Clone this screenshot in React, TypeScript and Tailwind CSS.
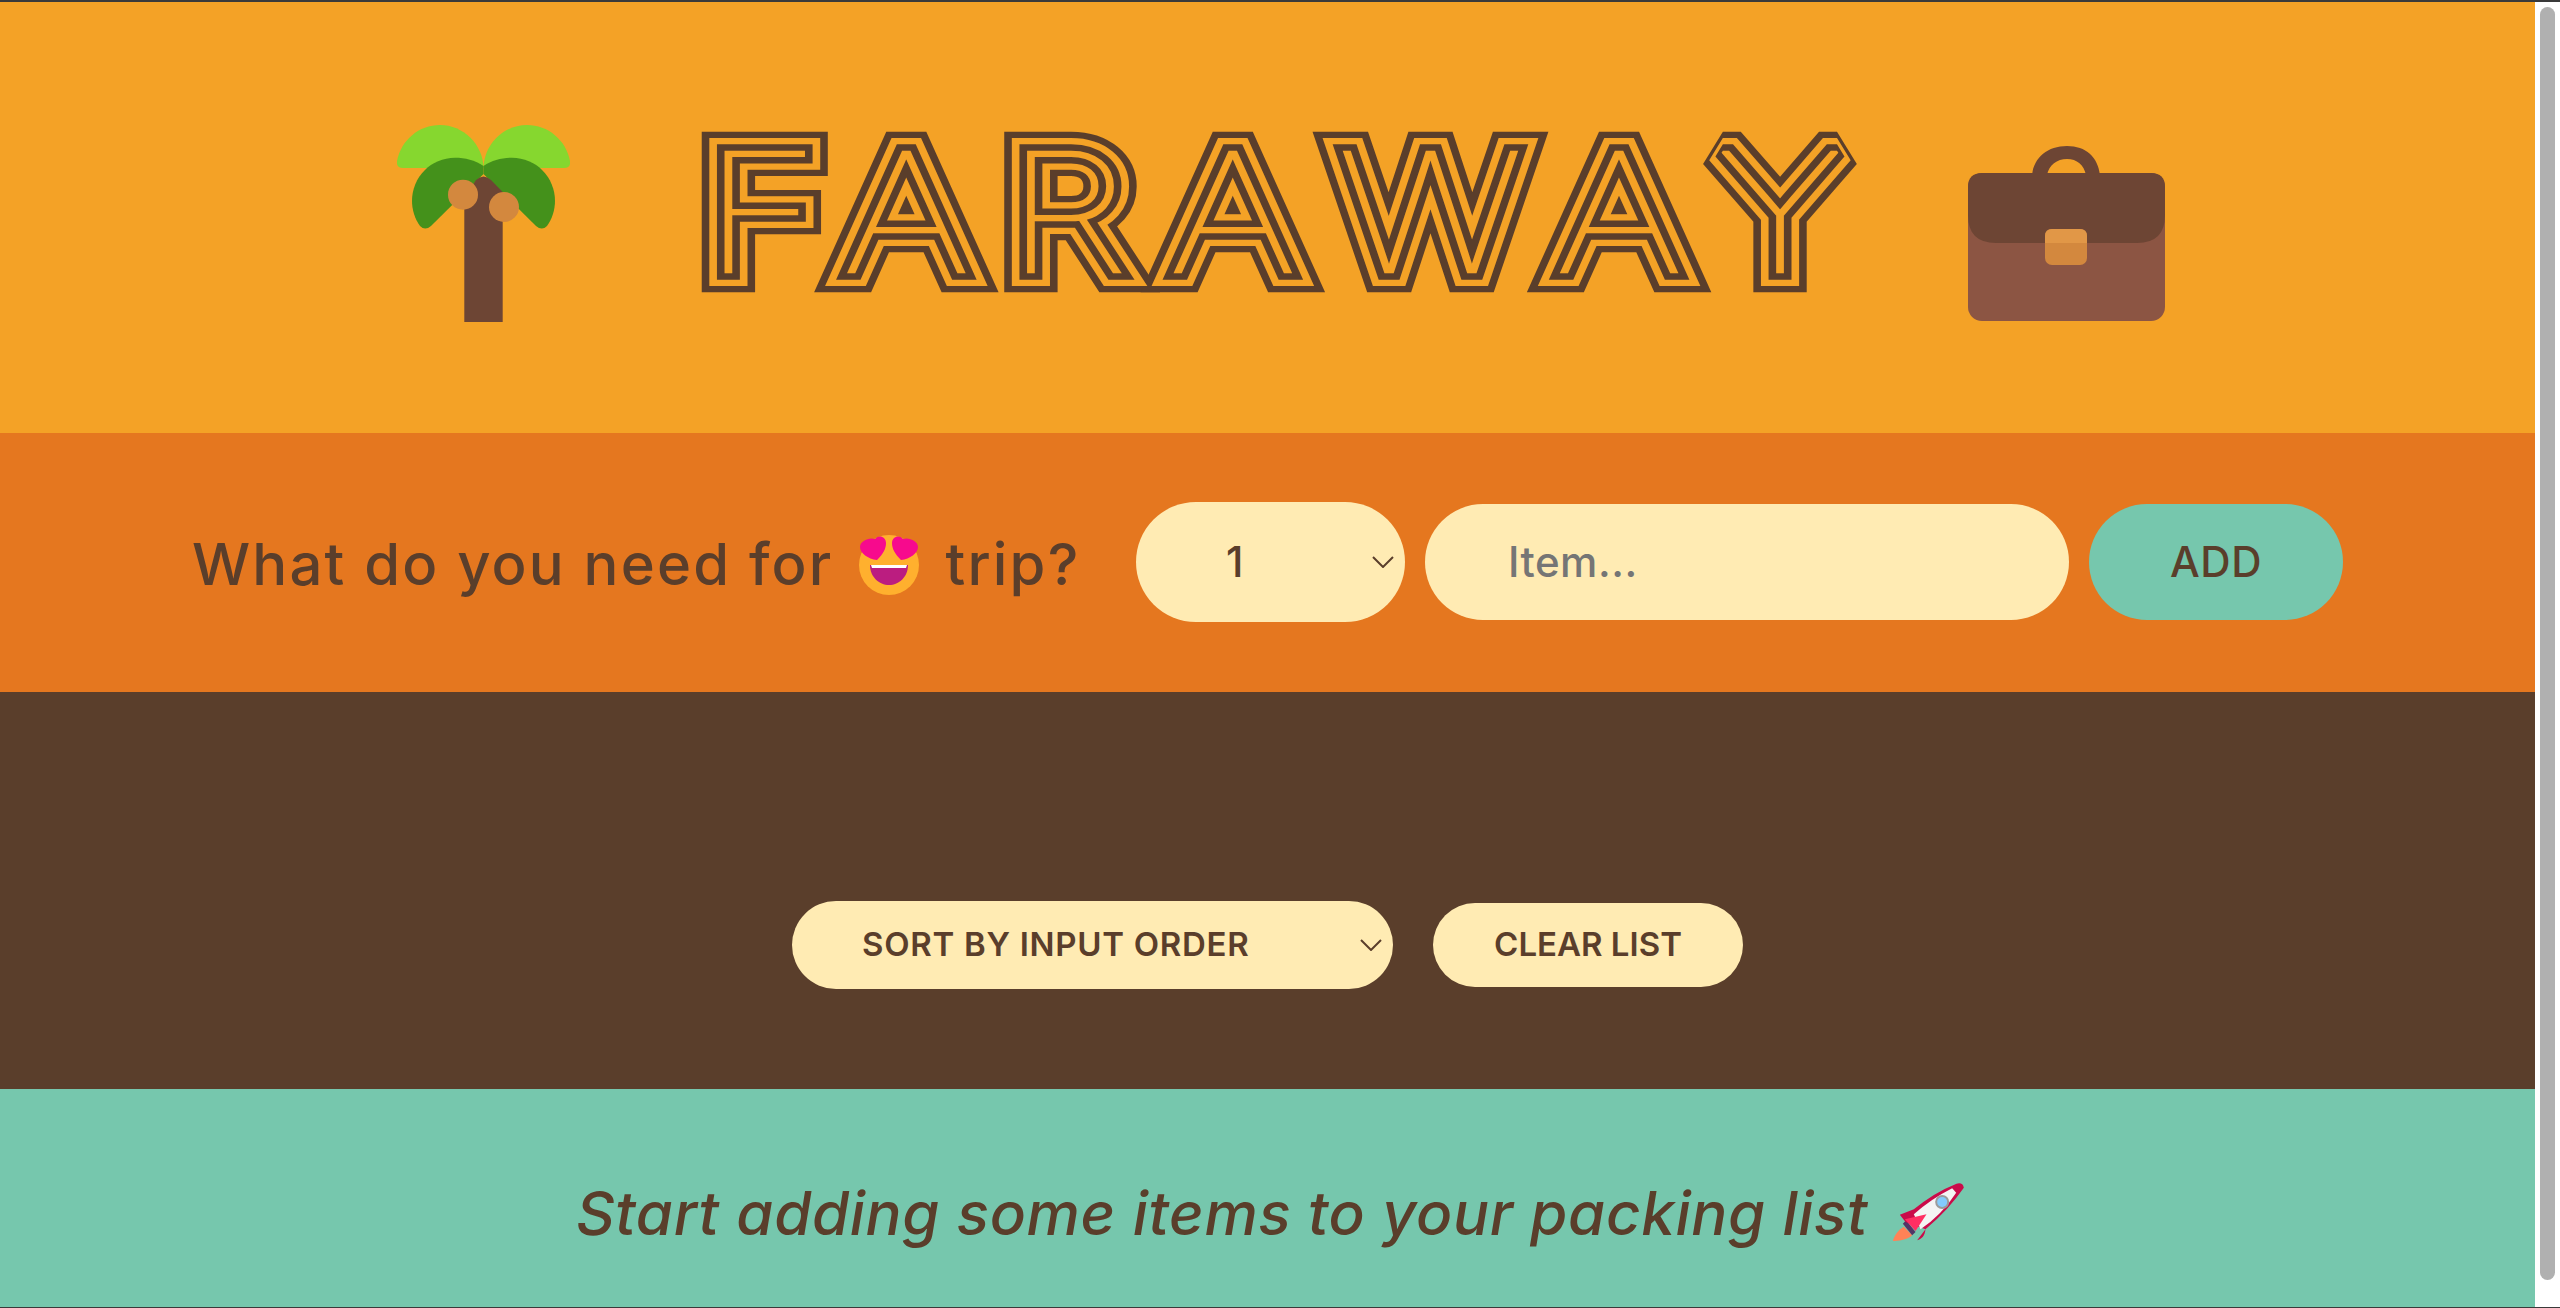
import React from 'react';

const PalmIcon = () => (
  <svg viewBox="0 0 173 198" className="w-[173px] h-[198px] shrink-0">
    <path d="M6 44Q-1 44 0 37C4 16 22 1 43 1C66 1 86 20 86.500 44Z" fill="#86d72f" />
    <path d="M6 44Q-1 44 0 37C4 16 22 1 43 1C66 1 86 20 86.500 44Z" fill="#86d72f" transform="translate(173 0) scale(-1 1)" />
    <path d="M86.500 42C78 36 68 33.700 58 33.700C34 33.700 15 53 15 77C15 86 18 95 23 102Q28 107 34 102L86.500 50Z" fill="#44911b" />
    <path d="M86.500 42C78 36 68 33.700 58 33.700C34 33.700 15 53 15 77C15 86 18 95 23 102Q28 107 34 102L86.500 50Z" fill="#44911b" transform="translate(173 0) scale(-1 1)" />
    <path d="M67.300 198V74L79 56Q86.500 49 94 56L105.700 68V198Z" fill="#6d4534" />
    <circle cx="66" cy="70.700" r="15" fill="#d3883e" />
    <circle cx="107" cy="83" r="15" fill="#d3883e" />
  </svg>
);

const LuggageIcon = () => (
  <svg viewBox="0 0 198 177" className="w-[198px] h-[177px] shrink-0">
    <path d="M64 30C66 12 80 1 99 1C118 1 130 12 132 30H118C116 20 109 14 99 14C89 14 81 20 79 30Z" fill="#6d4534" />
    <rect x="0" y="28" width="197" height="148" rx="14" fill="#8c5543" />
    <path d="M0 42Q0 28 14 28H183Q197 28 197 42V70Q197 98 169 98H28Q0 98 0 70Z" fill="#6d4534" />
    <rect x="77" y="84" width="42" height="36" rx="7" fill="#d3883e" />
    <path d="M77 98V91Q77 84 84 84H112Q119 84 119 91V98Z" fill="#e19747" />
  </svg>
);

const HeartEyes = () => (
  <svg viewBox="0 0 60 60" className="w-[60px] h-[60px] shrink-0">
    <circle cx="30" cy="30" r="30" fill="#ffb02e" />
    <path d="M27 8C27 2 20-1 16 4C10 2 1 6 1 12C1 18 9 24 18 25C24 19 27 14 27 8Z" fill="#f70a8d" />
    <path d="M33 8C33 2 40-1 44 4C50 2 59 6 59 12C59 18 51 24 42 25C36 19 33 14 33 8Z" fill="#f70a8d" />
    <path d="M11 30H49C49 42 40 50 30 50C20 50 11 42 11 30Z" fill="#bb1d80" />
    <path d="M12 30H48L47 33H13Z" fill="#ffffff" />
  </svg>
);

const Rocket = () => (
  <svg viewBox="90 38 218 180" className="w-[73px] h-[60px] shrink-0 mt-[5px]">
    <path d="M125 172L150 198C140 208 115 216 92 215C96 198 110 180 125 172Z" fill="#ff8257" />
    <path d="M122 163L132 153L160 188L150 198Z" fill="#533566" />
    <path d="M305 55Q302 38 283 43Q215 70 155 120L113 136L130 158L190 180L165 213C178 210 188 200 190 180Q260 120 305 55Z" fill="#ca0b4a" />
    <path d="M270 57L282 70Q240 135 175 180L155 135Q205 90 270 57Z" fill="#f4f4f4" />
    <circle cx="240" cy="98" r="21" fill="#9b9b9b" />
    <circle cx="240" cy="98" r="15" fill="#83cbff" />
    <path d="M128 150L193 135L160 185Z" fill="#ff2e63" />
  </svg>
);

// Select chevron sits over the control, the native one is too small here
const Chevron = ({ className }: { className: string }) => (
  <svg viewBox="0 0 22 12" className={`absolute w-[22px] h-[12px] pointer-events-none ${className}`}>
    <path d="M1 1L11 11L21 1" fill="none" stroke="#5a3e2b" strokeWidth="2" />
  </svg>
);

// Monoton-style striped lettering: concentric strokes of the same text
const titleLayers = [
  { stroke: 45, color: '#5a3e2b' },
  { stroke: 31, color: '#f4a226' },
  { stroke: 17, color: '#5a3e2b' },
  { stroke: 3, color: '#f4a226' },
];

const App: React.FC = () => {
  return (
    <div className="h-screen overflow-hidden flex border-t-2 border-b border-[#3a3a3a] bg-white font-['Inter',sans-serif] text-[#5a3e2b]">
      <main className="flex-1 flex flex-col min-w-0">
        <header className="h-[431px] bg-[#f4a226] flex justify-center items-end pb-[111px] pl-[27px]">
          <PalmIcon />
          <h1 className="w-[1154px] h-[162px] ml-[129px] mr-[115px] mb-[28px]">
            <svg viewBox="0 0 1154 162" className="w-full h-full overflow-visible">
              {titleLayers.map((layer, i) => (
                <text
                  key={i}
                  aria-hidden={i > 0}
                  transform="scale(1.2 1)"
                  x="4 120 256 392 533 714 848"
                  y="140"
                  fontFamily="Inter, sans-serif"
                  fontWeight="100"
                  fontSize="165"
                  fill={layer.color}
                  stroke={layer.color}
                  strokeWidth={layer.stroke}
                  strokeMiterlimit="2"
                  vectorEffect="non-scaling-stroke"
                >
                  FARAWAY
                </text>
              ))}
            </svg>
          </h1>
          <LuggageIcon />
        </header>

        <form className="h-[259px] bg-[#e5771f] flex justify-center items-center gap-5 pb-[2px]">
          <h3 className="w-[881px] mr-[43px] mt-[6px] flex items-center gap-[26px] text-[58px] tracking-[2.2px] font-medium whitespace-nowrap">
            What do you need for <HeartEyes /> trip?
          </h3>
          <div className="relative flex items-center">
            <select className="appearance-none w-[269px] h-[120px] pl-[90px] rounded-[80px] bg-[#ffebb3] text-[42px] font-medium">
              <option>1</option>
            </select>
            <Chevron className="right-[11px]" />
          </div>
          <input
            placeholder="Item..."
            className="w-[644px] h-[116px] pl-[83px] rounded-[80px] bg-[#ffebb3] text-[42px] tracking-[0.5px] font-medium placeholder:text-[#757575]"
          />
          <button type="button" className="w-[254px] h-[116px] rounded-[80px] bg-[#76c7ad] text-[42px] tracking-[0.5px] font-medium">
            ADD
          </button>
        </form>

        <section className="h-[397px] bg-[#5a3e2b] flex justify-center items-center gap-10 pt-[109px]">
          <div className="relative flex items-center">
            <select className="appearance-none w-[601px] h-[88px] pl-[70px] rounded-[80px] bg-[#ffebb3] text-[33px] tracking-[0.7px] font-semibold uppercase">
              <option>Sort by input order</option>
            </select>
            <Chevron className="right-[11px]" />
          </div>
          <button type="button" className="w-[310px] h-[84px] rounded-[80px] bg-[#ffebb3] text-[33px] font-semibold uppercase">
            Clear list
          </button>
        </section>

        <footer className="flex-1 bg-[#76c7ad] flex justify-center items-start gap-[24px] pt-[88px] pl-[6px]">
          <em className="text-[60px] leading-[72px] tracking-[0.65px] font-medium whitespace-nowrap">
            Start adding some items to your packing list
          </em>
          <Rocket />
        </footer>
      </main>

      <aside className="w-[25px] shrink-0 bg-white px-[5px] pt-[5px] pb-[27px]">
        <div className="h-full rounded-full bg-[#b0b0b0]" />
      </aside>
    </div>
  );
};

export default App;
